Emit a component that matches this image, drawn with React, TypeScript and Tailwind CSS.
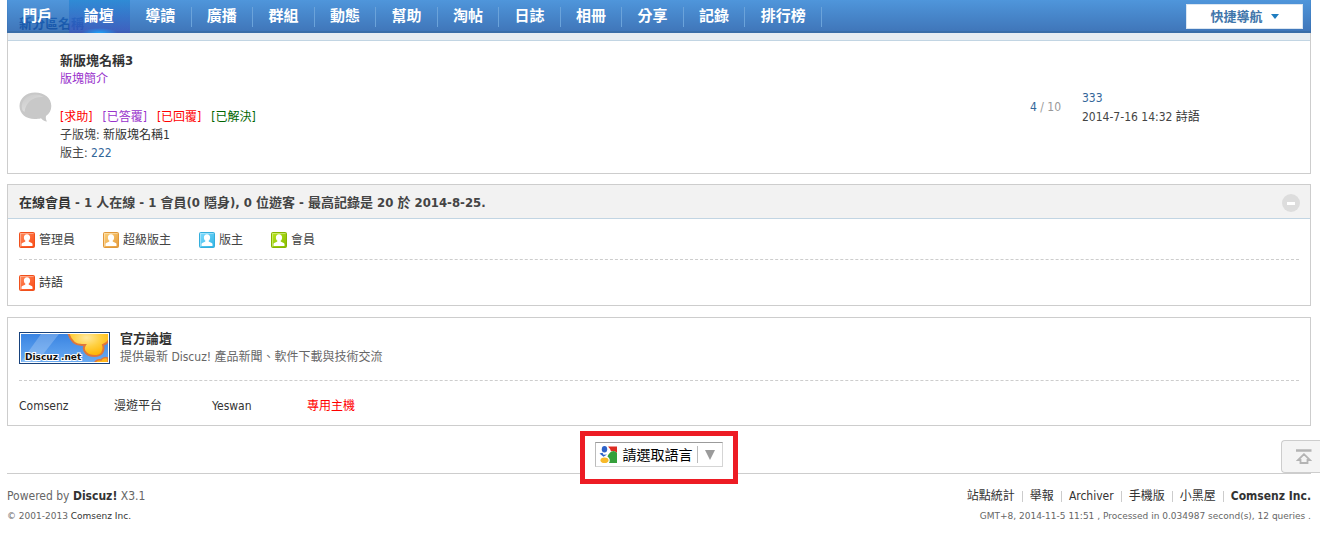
import React from "react";

const navItems = ["門戶", "論壇", "導讀", "廣播", "群組", "動態", "幫助", "淘帖", "日誌", "相冊", "分享", "記錄", "排行榜"];

const roles = [
  { label: "管理員", from: "#ff8a5c", to: "#fb4a14", edge: "#f0501c" },
  { label: "超級版主", from: "#ffd27a", to: "#e39a3c", edge: "#e0983a" },
  { label: "版主", from: "#7fdcff", to: "#2fb4e4", edge: "#34aedc" },
  { label: "會員", from: "#b9e61c", to: "#86bc00", edge: "#86b400" },
];

const tags = [
  { label: "[求助]", color: "text-[#ff0000]" },
  { label: "[已答覆]", color: "text-[#9932cc]" },
  { label: "[已回覆]", color: "text-[#ff0000]" },
  { label: "[已解決]", color: "text-[#006400]" },
];

const footerLinks = ["站點統計", "舉報", "Archiver", "手機版", "小黑屋"];

function UserIcon({ from, to, edge, id }: { from: string; to: string; edge: string; id: string }) {
  return (
    <svg width="16" height="16" viewBox="0 0 16 16" className="shrink-0" aria-hidden="true">
      <defs>
        <linearGradient id={id} x1="0" y1="0" x2="1" y2="1">
          <stop offset="0" stopColor={from} />
          <stop offset="1" stopColor={to} />
        </linearGradient>
      </defs>
      <rect x="0.5" y="0.5" width="15" height="15" rx="1" fill={`url(#${id})`} stroke={edge} />
      <path d="M1.5 14.5V1.5H14.5" fill="none" stroke="#fff" strokeOpacity="0.35" />
      <path d="M8 2.2c2 0 3.1 1.3 3.1 3.2 0 1.4-.6 2.6-1.4 3.2v1c.9.7 3.2.9 3.8 2.2V14H2.500v-2.200c.6-1.300 2.900-1.500 3.800-2.200v-1C5.500 8 4.900 6.800 4.900 5.400 4.900 3.500 6 2.200 8 2.200z" fill="#fff" />
    </svg>
  );
}

function BubbleIcon() {
  return (
    <svg width="33" height="31" viewBox="0 0 33 31" aria-hidden="true">
      <defs>
        <linearGradient id="bubble-shine" x1="0" y1="0" x2="0.6" y2="1">
          <stop offset="0" stopColor="#c8c8c8" />
          <stop offset="1" stopColor="#e2e2e2" />
        </linearGradient>
      </defs>
      <path d="M16 0.500C7 0.500 0.500 6.500 0.500 14c0 7.800 6.500 13 15 13 2.700 0 4.500-.2 6.500-.8 1.500 1.600 3.500 3 6 3.300-1-1.500-1.500-3.500-1-5.500 3.500-2.300 5.300-6 5.300-10C32.300 6.200 25.500 0.500 16 0.500z" fill="#c8c8c8" />
      <path d="M3 17C1.500 9 8 2.500 16 2.500c3.500 0 6 .8 8.500 2.500C15 4 7 9 5.500 20 4.200 19.200 3.300 18.200 3 17z" fill="url(#bubble-shine)" />
    </svg>
  );
}

function DiscuzBanner() {
  return (
    <svg width="91" height="32" viewBox="0 0 91 32" className="shrink-0" role="img" aria-label="Discuz .net">
      <defs>
        <linearGradient id="sky" x1="0" y1="0" x2="0" y2="1">
          <stop offset="0" stopColor="#3a84e2" />
          <stop offset="1" stopColor="#68aaf2" />
        </linearGradient>
        <radialGradient id="sun" cx="0.45" cy="0.3" r="0.7">
          <stop offset="0" stopColor="#ffe9a0" />
          <stop offset="0.5" stopColor="#ffd040" />
          <stop offset="1" stopColor="#ffb400" />
        </radialGradient>
        <clipPath id="banner-clip"><rect x="2" y="2" width="87" height="28" /></clipPath>
      </defs>
      <rect width="91" height="32" fill="#17427c" />
      <rect x="1" y="1" width="89" height="30" fill="#fff" />
      <g clipPath="url(#banner-clip)">
        <rect x="2" y="2" width="87" height="28" fill="url(#sky)" />
        <path d="M22 2h18L18 30H2z" fill="#fff" opacity="0.22" />
        <path d="M49 0c2 8 7 13 14 13h3c-2 3-1 6 1 8 4 4 13 4 16 0 2-3 2-5 1-8 3-1 5-3 6-5V-2H49z" fill="url(#sun)" stroke="#e0763a" strokeWidth="2" />
        <path d="M75 32c1-3 4-5 7-4 1-2 4-3 7-2v8z" fill="#ffb81c" stroke="#e0763a" strokeWidth="1.5" />
      </g>
      <text x="6" y="28" fontFamily="DejaVu Sans, sans-serif" fontSize="9" fontWeight="700" fill="#111" stroke="#fff" strokeWidth="2" paintOrder="stroke">Discuz .net</text>
    </svg>
  );
}

function GoogleIcon() {
  return (
    <svg width="19" height="19" viewBox="0 0 19 19" className="shrink-0" aria-hidden="true">
      <path d="M9 1.500h9v6.500c-2-2-4-2.500-6-1.500-.5-2-1.500-3.500-3-5z" fill="#dd2c22" />
      <path d="M18 8v10h-8c1.500-2.500 1-4.500-1.500-6.500C9.500 9 12 6 14.500 6c1.500 0 2.500 1 3.500 2z" fill="#35a03c" />
      <ellipse cx="5.500" cy="4.200" rx="2.700" ry="3.200" fill="#2e62c8" />
      <path d="M0.500 8.500l3-.8 1 2 3.500-.2-3.500 2.300z" fill="#2e62c8" />
      <ellipse cx="5.500" cy="15.200" rx="4" ry="2.800" fill="#f7b92a" />
    </svg>
  );
}

export default function App() {
  return (
    <div className="min-h-screen bg-white pr-[9px] pl-[7px] font-['DejaVu_Sans_Condensed','Noto_Sans_CJK_TC',sans-serif] text-xs text-[#444]">
      <nav className="absolute top-0 right-[9px] left-[7px] flex h-[33px] items-start justify-between border-b-2 border-[#3b6ea8] bg-linear-to-b from-[#2980d5]/80 to-[#1659ac]/80">
        <ul className="flex h-full w-[815px]">
          {navItems.map((item) => (
            <li
              key={item}
              className={
                item === "論壇"
                  ? "h-[33px] grow bg-[radial-gradient(18px_5px_at_50%_100%,#1ea4fa,transparent),linear-gradient(to_bottom,#1a84d299,#3f50c099)]"
                  : "h-[33px] grow"
              }
            >
              <a href="#" className="flex h-full items-center justify-center text-[15px] font-bold text-white">
                <span className="grow text-center">{item}</span>
                <span className={item === "門戶" || item === "論壇" ? "h-5 w-px" : "h-5 w-px bg-[#6ba3da]"} />
              </a>
            </li>
          ))}
        </ul>
        <button className="mt-1 mr-2 flex h-[25px] w-[117px] items-center justify-center gap-2 border border-[#dbe6f1] bg-white text-[13px] font-bold text-[#4176ab]">
          快捷導航
          <svg width="8" height="5" viewBox="0 0 8 5" aria-hidden="true"><path d="M0 0h8L4 5z" fill="#1f7dc0" /></svg>
        </button>
      </nav>

      <section className="border border-t-0 border-[#cdcdcd]">
        <h2 className="flex h-[41px] items-center border-b border-[#c2d5e3] bg-[#e8edf2] px-[11px] pt-[7px] text-[13px] font-bold text-[#1a3f90]">新分區名稱</h2>
        <div className="flex h-[132px] items-center">
          <div className="w-[52px] pl-[11px]"><BubbleIcon /></div>
          <div className="grow leading-[18px]">
            <h3 className="text-[13px] font-bold text-[#333]"><a href="#">新版塊名稱3</a></h3>
            <p className="text-[#9932cc]">版塊簡介</p>
            <p className="mt-5 flex gap-[10px]">
              {tags.map((t) => <a key={t.label} href="#" className={t.color}>{t.label}</a>)}
            </p>
            <p>子版塊: <a href="#" className="text-[#333]">新版塊名稱1</a></p>
            <p>版主: <a href="#" className="text-[#369]">222</a></p>
          </div>
          <div className="w-[52px] text-[#999]"><span className="text-[#369]">4</span> / 10</div>
          <div className="w-[228px] pt-[2px] leading-[19px]">
            <p><a href="#" className="text-[#369]">333</a></p>
            <p>2014-7-16 14:32 <a href="#" className="text-[#333]">詩語</a></p>
          </div>
        </div>
      </section>

      <section className="mt-[10px] border border-[#cdcdcd]">
        <header className="flex h-[34px] items-center justify-between border-b border-[#c2d5e3] bg-[#f2f2f2] pt-[3px] pr-[10px] pl-[11px]">
          <h3 className="text-[13px] font-bold text-[#444]"><a href="#" className="text-[#333]">在線會員</a> - 1 人在線 - 1 會員(0 隱身), 0 位遊客 - 最高記錄是 20 於 2014-8-25.</h3>
          <button aria-label="收起" className="flex size-[18px] items-center justify-center rounded-full bg-[#ddd]"><span className="h-[3px] w-2 bg-white" /></button>
        </header>
        <div className="px-[11px]">
          <ul className="flex h-[41px] items-center gap-7 border-b border-dashed border-[#cdcdcd] pt-[2px]">
            {roles.map((r, i) => (
              <li key={r.label} className="flex items-center gap-1"><UserIcon id={`role-${i}`} from={r.from} to={r.to} edge={r.edge} />{r.label}</li>
            ))}
          </ul>
          <div className="flex h-[45px] items-center gap-1"><UserIcon id="member" from={roles[0].from} to={roles[0].to} edge={roles[0].edge} /><a href="#" className="text-[#333]">詩語</a></div>
        </div>
      </section>

      <section className="mt-[11px] border border-[#cdcdcd] px-[11px]">
        <div className="flex h-[63px] items-center gap-[10px] border-b border-dashed border-[#cdcdcd] pb-[3px]">
          <DiscuzBanner />
          <div className="leading-[18px] text-[#666]">
            <h3 className="text-[13px] font-bold text-[#333]"><a href="#">官方論壇</a></h3>
            <p>提供最新 Discuz! 產品新聞、軟件下載與技術交流</p>
          </div>
        </div>
        <ul className="flex h-11 items-center pt-[6px] text-[#333]">
          <li className="w-[95px]"><a href="#">Comsenz</a></li>
          <li className="w-[98px]"><a href="#">漫遊平台</a></li>
          <li className="w-[95px]"><a href="#">Yeswan</a></li>
          <li><a href="#" className="text-[#ff0000]">專用主機</a></li>
        </ul>
      </section>

      <div className="relative h-12 border-b border-[#cdcdcd]">
        <div className="absolute inset-x-0 top-[5px] mx-auto flex h-[53px] w-[158px] items-start border-[5px] border-[#ed1c24] bg-white px-[10px] pt-[6px]">
          <button className="flex h-[25px] w-full items-center border border-t-[#9b9b9b] border-r-[#d5d5d5] border-b-[#d5d5d5] border-l-[#bbb] pl-[3px] text-sm text-black">
            <GoogleIcon />
            <span className="grow text-center">請選取語言</span>
            <span className="h-[17px] w-px bg-[#bbb]" />
            <svg width="24" height="10" viewBox="0 0 24 10" aria-hidden="true"><path d="M7 0h10l-5 10z" fill="#9b9b9b" /></svg>
          </button>
        </div>
        <button aria-label="返回頂部" className="absolute top-[14px] -right-[9px] flex h-[33px] w-[39px] items-center rounded-l border border-r-0 border-[#cdcdcd] bg-[#f4f4f4] pl-[14px]">
          <svg width="16" height="15" viewBox="0 0 16 15" aria-hidden="true">
            <path d="M0 1.500h15.500" stroke="#b4b4b4" strokeWidth="2.5" />
            <path d="M8 5.200L2 11H4.500V14H11.500V11H14Z" fill="#f4f4f4" stroke="#b4b4b4" strokeWidth="1.8" />
          </svg>
        </button>
      </div>

      <footer className="flex justify-between pt-3 text-[#666]">
        <div>
          <p className="leading-5">Powered by <a href="#" className="font-bold text-[#333]">Discuz!</a> X3.1</p>
          <p className="font-['DejaVu_Sans',sans-serif] text-[9px] leading-5">© 2001-2013 <a href="#" className="text-[#333]">Comsenz Inc.</a></p>
        </div>
        <div className="text-right">
          <p className="flex justify-end leading-5 text-[#333]">
            {footerLinks.map((l) => (
              <span key={l} className="flex items-center"><a href="#">{l}</a><span className="mx-[7px] h-[11px] w-px bg-[#ccc]" /></span>
            ))}
            <a href="#" className="font-bold">Comsenz Inc.</a>
          </p>
          <p className="font-['DejaVu_Sans',sans-serif] text-[9px] leading-5">GMT+8, 2014-11-5 11:51 , Processed in 0.034987 second(s), 12 queries .</p>
        </div>
      </footer>
    </div>
  );
}
